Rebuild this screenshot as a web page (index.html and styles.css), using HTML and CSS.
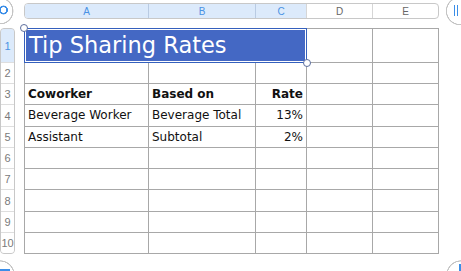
FILE: index.html
```html
<!doctype html>
<html>
  <head>
    <meta charset="UTF-8" />
    <title>Tip Sharing Rates</title>
    <link rel="stylesheet" href="styles.css">
  </head>
  <body>
    <div class="page">
      <div class="corner"><span class="select-all"></span></div>

      <div class="col-heads">
        <div class="col-head sel">A</div>
        <div class="col-head sel">B</div>
        <div class="col-head sel">C</div>
        <div class="col-head">D</div>
        <div class="col-head">E</div>
      </div>

      <div class="row-heads">
        <div class="row-head sel">1</div>
        <div class="row-head">2</div>
        <div class="row-head">3</div>
        <div class="row-head">4</div>
        <div class="row-head">5</div>
        <div class="row-head">6</div>
        <div class="row-head">7</div>
        <div class="row-head">8</div>
        <div class="row-head">9</div>
        <div class="row-head">10</div>
      </div>

      <div class="sheet">
        <div class="cell title">Tip Sharing Rates<span class="handle tl"></span><span class="handle br"></span></div>
        <div class="cell"></div>
        <div class="cell"></div>

        <div class="cell"></div>
        <div class="cell"></div>
        <div class="cell"></div>
        <div class="cell"></div>
        <div class="cell"></div>

        <div class="cell bold">Coworker</div>
        <div class="cell bold">Based on</div>
        <div class="cell bold num">Rate</div>
        <div class="cell"></div>
        <div class="cell"></div>

        <div class="cell">Beverage Worker</div>
        <div class="cell">Beverage Total</div>
        <div class="cell num">13%</div>
        <div class="cell"></div>
        <div class="cell"></div>

        <div class="cell">Assistant</div>
        <div class="cell">Subtotal</div>
        <div class="cell num">2%</div>
        <div class="cell"></div>
        <div class="cell"></div>

        <div class="cell"></div><div class="cell"></div><div class="cell"></div><div class="cell"></div><div class="cell"></div>
        <div class="cell"></div><div class="cell"></div><div class="cell"></div><div class="cell"></div><div class="cell"></div>
        <div class="cell"></div><div class="cell"></div><div class="cell"></div><div class="cell"></div><div class="cell"></div>
        <div class="cell"></div><div class="cell"></div><div class="cell"></div><div class="cell"></div><div class="cell"></div>
        <div class="cell"></div><div class="cell"></div><div class="cell"></div><div class="cell"></div><div class="cell"></div>
      </div>
    </div>

    <span class="knob knob-cols"><i></i><i></i></span>
    <span class="knob knob-rows"><i></i></span>
    <span class="knob knob-add"><i></i></span>
  </body>
</html>
```

FILE: styles.css
```css
html {
  overflow: hidden;
}
html, body {
  margin: 0;
  background: #fff;
}
body {
  position: relative;
  width: 461px;
  height: 271px;
  overflow: hidden;
  font-family: "DejaVu Sans", sans-serif;
}
.page {
  display: grid;
  grid-template-columns: 24px 415px;
  grid-template-rows: 28px 226px;
}

/* select-all button, top left (only part of it is in view) */
.corner {
  position: relative;
}
.select-all {
  position: absolute;
  left: 0;
  top: 0;
  width: 14px;
  height: 24px;
  background:
    radial-gradient(circle at 3.5px 10px, transparent 2.6px, #3b8ee8 3px, #3b8ee8 4.2px, transparent 4.7px),
    radial-gradient(circle at 0 11px, #fff 12px, #c4c4c4 12.5px, #c4c4c4 13.2px, transparent 13.7px);
}

/* column letters */
.col-heads {
  display: flex;
  box-sizing: border-box;
  margin-top: 3px;
  height: 16px;
  border: 1px solid #c8c8c8;
  border-radius: 4px;
  overflow: hidden;
  font-family: "Liberation Sans", Arial, sans-serif;
  font-size: 10px;
  color: #666;
}
.col-head {
  display: flex;
  align-items: center;
  justify-content: center;
  border-left: 1px solid #d6d6d6;
}
.col-head:first-child { border-left: 0; width: 123px; }
.col-head:nth-child(2) { width: 106px; }
.col-head:nth-child(3) { width: 50px; }
.col-head:nth-child(4) { width: 65px; }
.col-head:nth-child(5) { width: 65px; }
.col-head.sel {
  background: #dceafb;
  color: #4a92e4;
  border-left-color: #b9cbe3;
}

/* row numbers */
.row-heads {
  display: grid;
  grid-template-rows: 33px 20px 20px 21px 20px 20px 20px 21px 20px 20px;
  row-gap: 1px;
  width: 15px;
  box-sizing: border-box;
  border: 1px solid #c8c8c8;
  border-radius: 4px;
  background: #dedede;
  overflow: hidden;
  font-family: "Liberation Sans", Arial, sans-serif;
  font-size: 11px;
  color: #7a7a7a;
}
.row-head {
  display: flex;
  align-items: center;
  justify-content: center;
  background: #fff;
  white-space: nowrap;
}
.row-head.sel {
  background: #dceafb;
  color: #4a92e4;
}

/* the sheet */
.sheet {
  display: grid;
  grid-template-columns: 123px 106px 50px 65px 65px;
  grid-template-rows: 33px 20px 20px 21px 20px 20px 20px 21px 20px 20px;
  gap: 1px;
  border: 1px solid #a8a8a8;
  background: #a8a8a8;
  font-size: 12px;
  color: #111;
}
.cell {
  display: flex;
  align-items: center;
  padding: 0 3px 1px;
  background: #fff;
  white-space: nowrap;
  overflow: hidden;
}
.bold {
  font-weight: bold;
}
.num {
  justify-content: flex-end;
}
.cell.title {
  grid-column: span 3;
  position: relative;
  overflow: visible;
  padding: 0 0 1px 4px;
  background: #4468c4;
  box-shadow: inset 0 0 0 1px #fff;
  outline: 1px solid #3560bd;
  color: #fff;
  font-size: 22.5px;
}
.handle {
  position: absolute;
  width: 6px;
  height: 6px;
  border: 1px solid #5d6f9e;
  border-radius: 50%;
  background: #fff;
}
.handle.tl { left: -5px; top: -5px; }
.handle.br { right: -5px; bottom: -5px; }

/* round buttons cut by the window edges */
.knob {
  position: absolute;
}
.knob i {
  position: absolute;
  background: #3b8ee8;
}
.knob-cols {
  left: 446px;
  top: 0;
  width: 15px;
  height: 25px;
  background: radial-gradient(circle at 14px 11px, #fff 12.8px, #c4c4c4 13.2px, #c4c4c4 13.9px, transparent 14.4px);
}
.knob-cols i { top: 5px; width: 1px; height: 11px; }
.knob-cols i:first-child { left: 8px; }
.knob-cols i:last-child { left: 11px; }
.knob-rows {
  left: 0;
  top: 260px;
  width: 16px;
  height: 11px;
  background: radial-gradient(circle at 0 15px, #fff 13.3px, #c4c4c4 13.7px, #c4c4c4 14.4px, transparent 14.9px);
}
.knob-rows i { left: 0; top: 9px; width: 10px; height: 1.5px; }
.knob-add {
  left: 445px;
  top: 260px;
  width: 16px;
  height: 11px;
  background: radial-gradient(circle at 16px 15px, #fff 13.3px, #c4c4c4 13.7px, #c4c4c4 14.4px, transparent 14.9px);
}
.knob-add i { left: 14px; top: 4px; width: 1.5px; height: 7px; }
```
